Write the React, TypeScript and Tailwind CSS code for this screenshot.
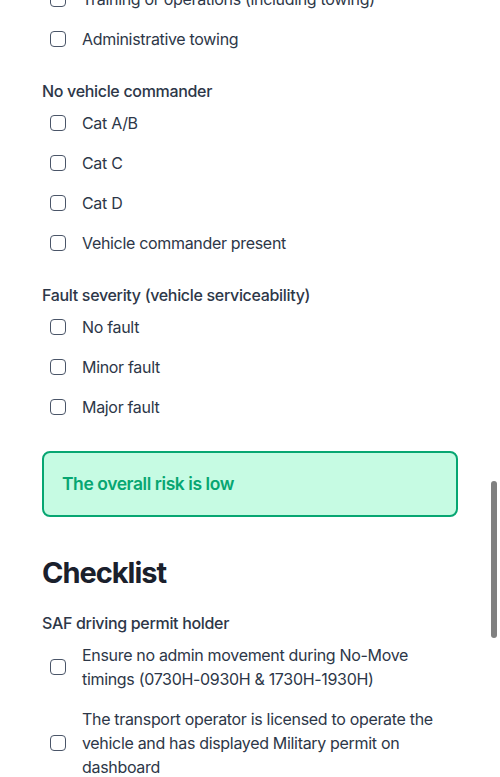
import React from "react";

const Box = () => (
  <span className="block w-4 h-4 shrink-0 rounded-[4px] border-[1.5px] border-[#4a5568] bg-white" />
);

const Row = ({ label }: { label: string }) => (
  <label className="flex items-center py-2 pl-2">
    <Box />
    <span className="ml-4 text-base leading-6 text-[#2d3748]">{label}</span>
  </label>
);

const Heading = ({ children }: { children: React.ReactNode }) => (
  <div className="mt-5 text-base leading-6 font-medium text-[#2d3748]">{children}</div>
);

export default function App() {
  return (
    <div
      className="relative w-[500px] h-[777px] overflow-hidden bg-white tracking-[-0.02em]"
      style={{ fontFamily: "Inter, 'Noto Sans', sans-serif" }}
    >
      <div className="mt-[-21px] pl-[42px] pr-[42px]">
        <Row label="Training or operations (including towing)" />
        <Row label="Administrative towing" />
        <Heading>No vehicle commander</Heading>
        <Row label="Cat A/B" />
        <Row label="Cat C" />
        <Row label="Cat D" />
        <Row label="Vehicle commander present" />
        <Heading>Fault severity (vehicle serviceability)</Heading>
        <Row label="No fault" />
        <Row label="Minor fault" />
        <Row label="Major fault" />
        <div className="mt-6 h-[66px] rounded-lg border-2 border-[#07a672] bg-[#c6fbe3] flex items-center px-[18px]">
          <span className="text-[17.5px] font-semibold tracking-[-0.025em] text-[#07a672]">The overall risk is low</span>
        </div>
        <h2 className="mt-[38px] text-[29px] leading-9 font-bold tracking-[-0.035em] text-[#1a202c]">Checklist</h2>
        <Heading>SAF driving permit holder</Heading>
        <Row label="Ensure no admin movement during No-Move timings (0730H-0930H & 1730H-1930H)" />
        <Row label="The transport operator is licensed to operate the vehicle and has displayed Military permit on dashboard" />
      </div>
      <div className="absolute left-[491px] top-[481px] w-[6px] h-[157px] rounded-full bg-[#808080]" />
    </div>
  );
}
